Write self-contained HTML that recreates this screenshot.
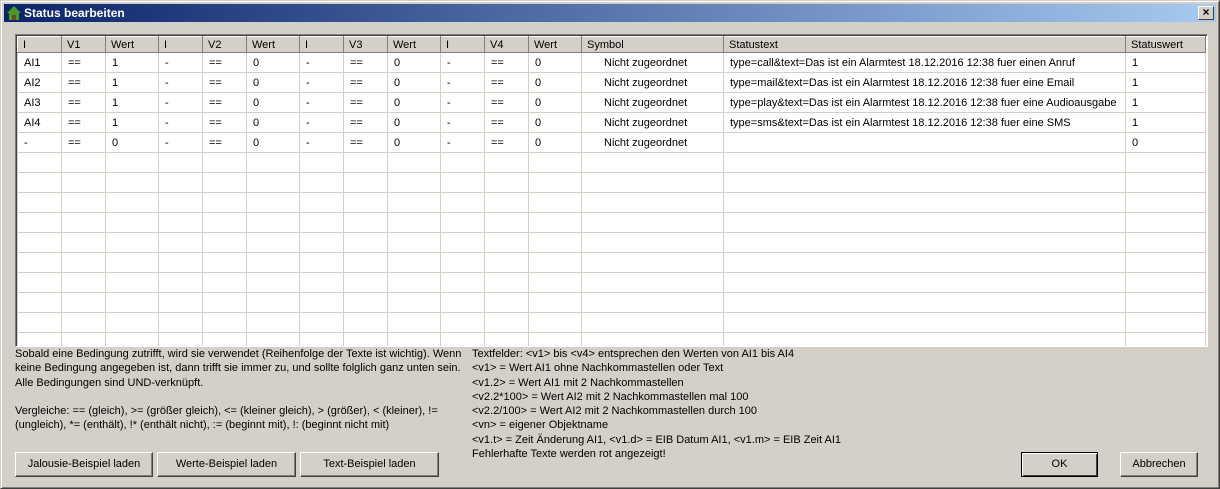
<!DOCTYPE html>
<html><head><meta charset="utf-8"><style>
*{margin:0;padding:0;box-sizing:border-box}
body{width:1220px;height:489px;background:#d4d0c8;font-family:"Liberation Sans",sans-serif;font-size:11px;color:#000;position:relative;overflow:hidden}
.win{position:absolute;left:0;top:0;width:1220px;height:489px;border:1px solid;border-color:#d4d0c8 #404040 #404040 #d4d0c8;box-shadow:inset 1px 1px 0 #fff,inset -1px -1px 0 #808080}
.title{position:absolute;left:4px;top:4px;width:1212px;height:18px;background:linear-gradient(to right,#0a246a,#a6caf0);color:#fff;font-weight:bold;font-size:12px;line-height:18px;padding-left:20px}
.close{position:absolute;right:6px;top:6px;width:16px;height:14px;background:#d4d0c8;border:1px solid;border-color:#fff #404040 #404040 #fff;color:#000;font-size:12px;line-height:11px;text-align:center;font-weight:bold}
.grid{position:absolute;left:15px;top:34px;width:1193px;height:313px;border:1px solid;border-color:#808080 #fff #fff #808080;box-shadow:inset 1px 1px 0 #404040;background:#fff;overflow:hidden;padding:1px 0 0 1px}
table{border-collapse:collapse;table-layout:fixed;width:1188px}
td,th{height:20px;border:1px solid #d4d0c8;padding:0 0 0 6px;white-space:nowrap;overflow:hidden;text-align:left;font-weight:normal}
th{height:16px;background:#d4d0c8;border:1px solid;border-color:#fff #808080 #808080 #fff;padding-left:5px}
td.c{padding-left:22px}
.txt{position:absolute;line-height:14.3px;white-space:nowrap}
.btn{position:absolute;height:25px;background:#d4d0c8;border:1px solid;border-color:#fff #404040 #404040 #fff;box-shadow:inset -1px -1px 0 #808080;text-align:center;line-height:22px}
</style></head><body>
<div class="win"></div>
<div class="title"><svg style="position:absolute;left:2px;top:1px" width="16" height="16" viewBox="0 0 16 16"><path d="M1 8 L8 1 L15 8 L13 8 L13 15 L3 15 L3 8 Z" fill="#4a9a2a"/><rect x="6" y="10" width="4" height="5" fill="#6a4a20"/></svg>Status bearbeiten</div>
<div class="close">×</div>
<div class="grid"><table>
<colgroup><col style="width:44px"><col style="width:44px"><col style="width:53px"><col style="width:44px"><col style="width:44px"><col style="width:53px"><col style="width:44px"><col style="width:44px"><col style="width:53px"><col style="width:44px"><col style="width:44px"><col style="width:53px"><col style="width:142px"><col style="width:402px"><col style="width:80px"></colgroup>
<tr><th>I</th><th>V1</th><th>Wert</th><th>I</th><th>V2</th><th>Wert</th><th>I</th><th>V3</th><th>Wert</th><th>I</th><th>V4</th><th>Wert</th><th>Symbol</th><th>Statustext</th><th>Statuswert</th></tr>
<tr><td>AI1</td><td>==</td><td>1</td><td>-</td><td>==</td><td>0</td><td>-</td><td>==</td><td>0</td><td>-</td><td>==</td><td>0</td><td class="c">Nicht zugeordnet</td><td>type=call&amp;text=Das ist ein Alarmtest 18.12.2016 12:38 fuer einen Anruf</td><td>1</td></tr>
<tr><td>AI2</td><td>==</td><td>1</td><td>-</td><td>==</td><td>0</td><td>-</td><td>==</td><td>0</td><td>-</td><td>==</td><td>0</td><td class="c">Nicht zugeordnet</td><td>type=mail&amp;text=Das ist ein Alarmtest 18.12.2016 12:38 fuer eine Email</td><td>1</td></tr>
<tr><td>AI3</td><td>==</td><td>1</td><td>-</td><td>==</td><td>0</td><td>-</td><td>==</td><td>0</td><td>-</td><td>==</td><td>0</td><td class="c">Nicht zugeordnet</td><td>type=play&amp;text=Das ist ein Alarmtest 18.12.2016 12:38 fuer eine Audioausgabe</td><td>1</td></tr>
<tr><td>AI4</td><td>==</td><td>1</td><td>-</td><td>==</td><td>0</td><td>-</td><td>==</td><td>0</td><td>-</td><td>==</td><td>0</td><td class="c">Nicht zugeordnet</td><td>type=sms&amp;text=Das ist ein Alarmtest 18.12.2016 12:38 fuer eine SMS</td><td>1</td></tr>
<tr><td>-</td><td>==</td><td>0</td><td>-</td><td>==</td><td>0</td><td>-</td><td>==</td><td>0</td><td>-</td><td>==</td><td>0</td><td class="c">Nicht zugeordnet</td><td></td><td>0</td></tr>
<tr><td></td><td></td><td></td><td></td><td></td><td></td><td></td><td></td><td></td><td></td><td></td><td></td><td></td><td></td><td></td></tr>
<tr><td></td><td></td><td></td><td></td><td></td><td></td><td></td><td></td><td></td><td></td><td></td><td></td><td></td><td></td><td></td></tr>
<tr><td></td><td></td><td></td><td></td><td></td><td></td><td></td><td></td><td></td><td></td><td></td><td></td><td></td><td></td><td></td></tr>
<tr><td></td><td></td><td></td><td></td><td></td><td></td><td></td><td></td><td></td><td></td><td></td><td></td><td></td><td></td><td></td></tr>
<tr><td></td><td></td><td></td><td></td><td></td><td></td><td></td><td></td><td></td><td></td><td></td><td></td><td></td><td></td><td></td></tr>
<tr><td></td><td></td><td></td><td></td><td></td><td></td><td></td><td></td><td></td><td></td><td></td><td></td><td></td><td></td><td></td></tr>
<tr><td></td><td></td><td></td><td></td><td></td><td></td><td></td><td></td><td></td><td></td><td></td><td></td><td></td><td></td><td></td></tr>
<tr><td></td><td></td><td></td><td></td><td></td><td></td><td></td><td></td><td></td><td></td><td></td><td></td><td></td><td></td><td></td></tr>
<tr><td></td><td></td><td></td><td></td><td></td><td></td><td></td><td></td><td></td><td></td><td></td><td></td><td></td><td></td><td></td></tr>
<tr><td></td><td></td><td></td><td></td><td></td><td></td><td></td><td></td><td></td><td></td><td></td><td></td><td></td><td></td><td></td></tr>
</table></div>
<div class="txt" style="left:15px;top:347px">Sobald eine Bedingung zutrifft, wird sie verwendet (Reihenfolge der Texte ist wichtig). Wenn<br>keine Bedingung angegeben ist, dann trifft sie immer zu, und sollte folglich ganz unten sein.<br>Alle Bedingungen sind UND-verknüpft.<br><br>Vergleiche: == (gleich), &gt;= (größer gleich), &lt;= (kleiner gleich), &gt; (größer), &lt; (kleiner), !=<br>(ungleich), *= (enthält), !* (enthält nicht), := (beginnt mit), !: (beginnt nicht mit)</div>
<div class="txt" style="left:472px;top:347px">Textfelder: &lt;v1&gt; bis &lt;v4&gt; entsprechen den Werten von AI1 bis AI4<br>&lt;v1&gt; = Wert AI1 ohne Nachkommastellen oder Text<br>&lt;v1.2&gt; = Wert AI1 mit 2 Nachkommastellen<br>&lt;v2.2*100&gt; = Wert AI2 mit 2 Nachkommastellen mal 100<br>&lt;v2.2/100&gt; = Wert AI2 mit 2 Nachkommastellen durch 100<br>&lt;vn&gt; = eigener Objektname<br>&lt;v1.t&gt; = Zeit Änderung AI1, &lt;v1.d&gt; = EIB Datum AI1, &lt;v1.m&gt; = EIB Zeit AI1<br>Fehlerhafte Texte werden rot angezeigt!</div>
<div class="btn" style="left:15px;top:452px;width:138px">Jalousie-Beispiel laden</div>
<div class="btn" style="left:157px;top:452px;width:139px">Werte-Beispiel laden</div>
<div class="btn" style="left:300px;top:452px;width:139px">Text-Beispiel laden</div>
<div class="btn" style="left:1021px;top:452px;width:77px;border:1px solid #000;box-shadow:inset 1px 1px 0 #fff,inset -1px -1px 0 #404040">OK</div>
<div class="btn" style="left:1120px;top:452px;width:78px">Abbrechen</div>
</body></html>
